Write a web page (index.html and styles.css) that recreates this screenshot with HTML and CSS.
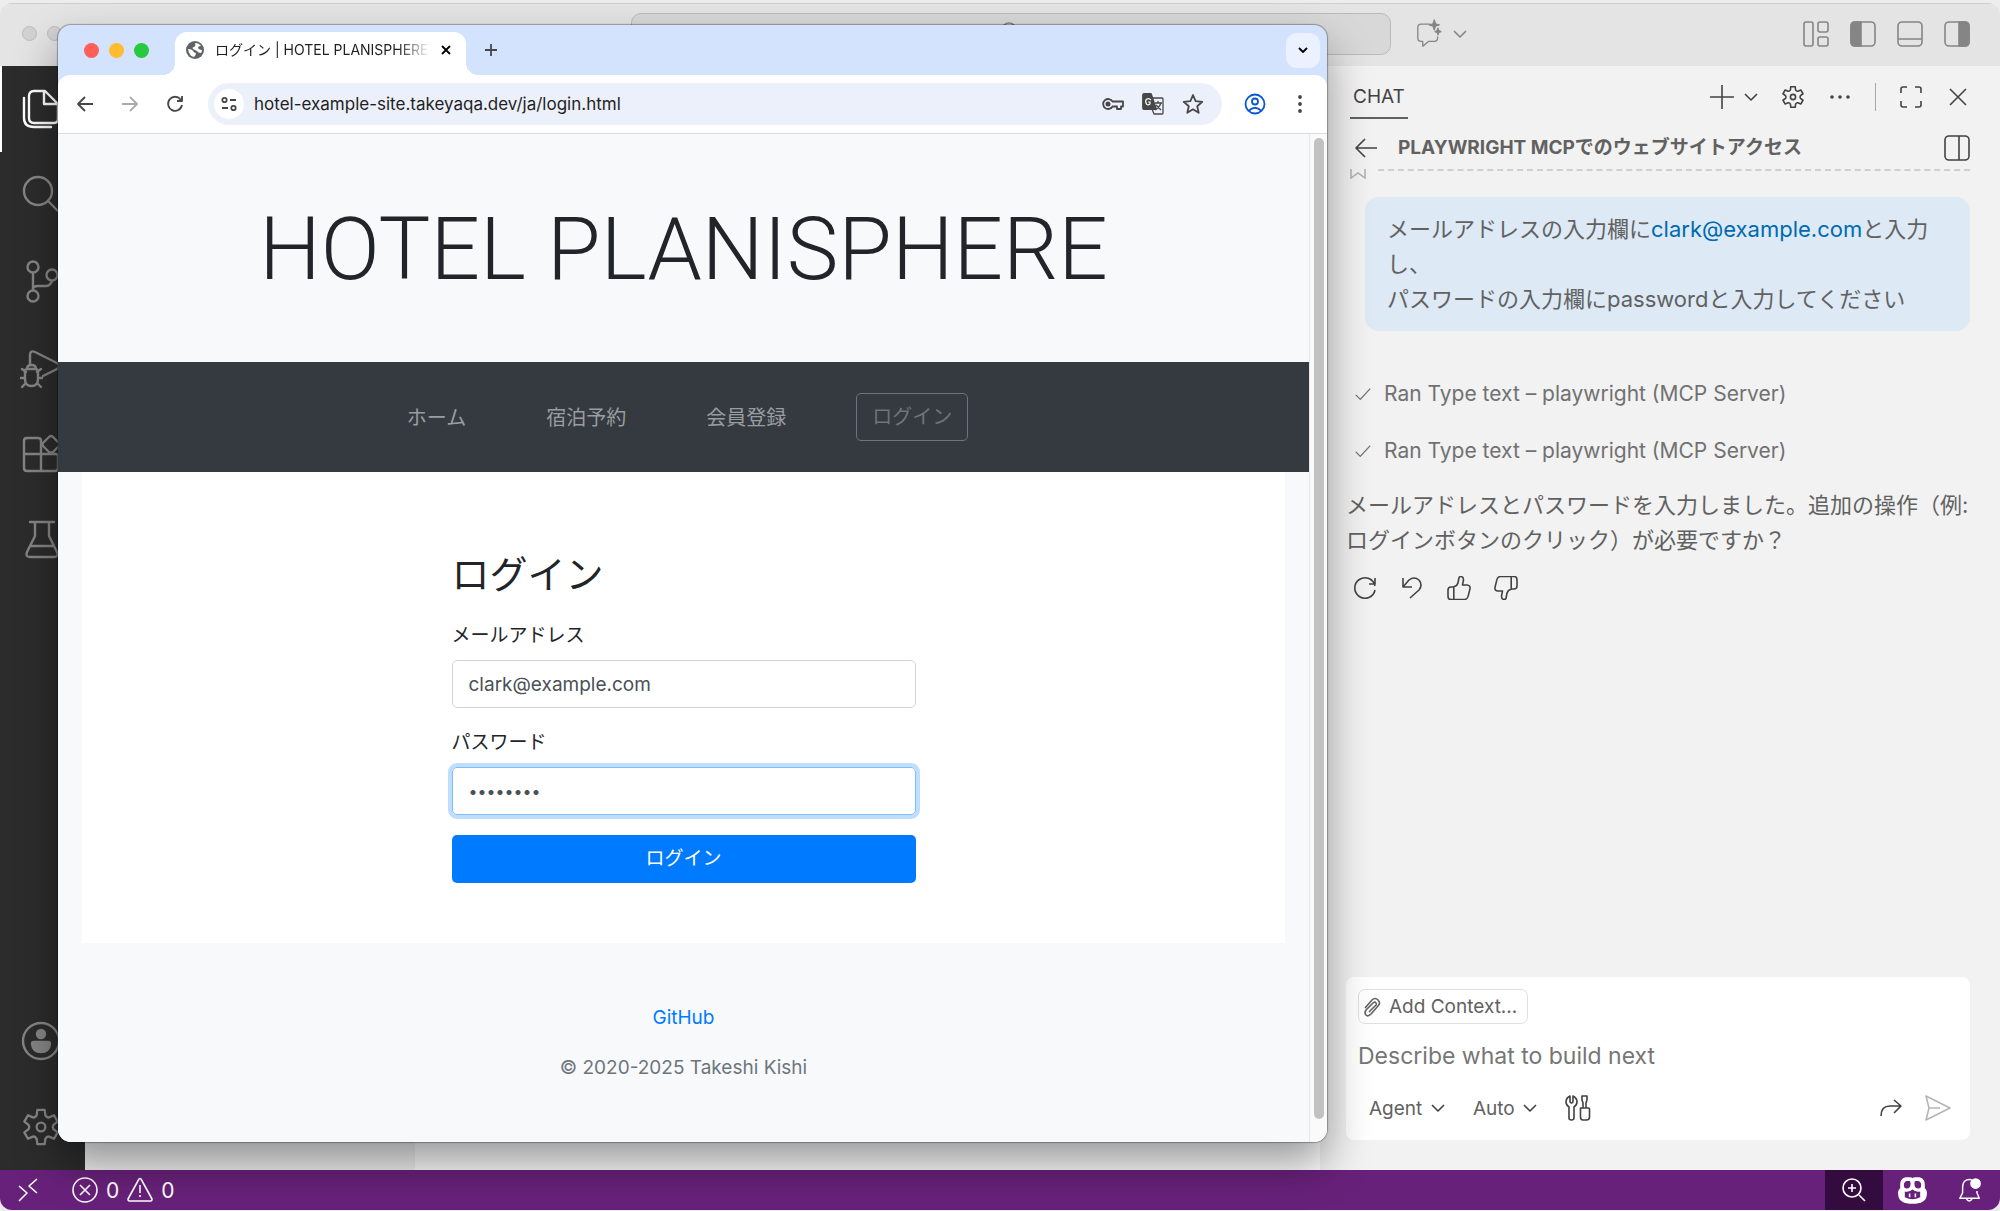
FILE: index.html
```html
<!DOCTYPE html>
<html lang="ja">
<head>
    <meta charset="UTF-8">
    <meta name="viewport" content="width=device-width, initial-scale=1.0">
    <title>ログイン | HOTEL PLANISPHERE</title>
    <link rel="stylesheet" href="styles.css">
</head>
<body>
    <svg class="symbols" aria-hidden="true">
        <symbol id="gear" viewBox="0 0 24 24"><path d="M9.4 4.9L9.8 1.7H14.2L14.6 4.9Q15.5 6.6 16.85 6.2L19.8 4.95L22 8.75L19.45 10.7Q18.6 12 19.45 13.3L22 15.25L19.8 19.05L16.85 17.8Q15.5 17.4 14.6 19.1L14.2 22.3H9.8L9.4 19.1Q8.5 17.4 7.15 17.8L4.2 19.05L2 15.25L4.55 13.3Q5.4 12 4.55 10.7L2 8.75L4.2 4.95L7.15 6.2Q8.5 6.6 9.4 4.9Z"/><circle cx="12" cy="12" r="2.6"/></symbol>
        <symbol id="chevron" viewBox="0 0 14 14"><path d="M1 4l6 6 6-6"/></symbol>
        <symbol id="check" viewBox="0 0 20 20"><path d="M2 11l5 5L18 4"/></symbol>
        <symbol id="thumb" viewBox="0 0 24 24"><path d="M6.500 11L9.500 9.500 11 7 11.800 2.500Q12.400 0 14.500 .5Q17 1.500 16.300 4.800L15.500 9H20Q23.500 9.200 23 12.600L21.300 19.600Q20.500 23.500 17.500 23.500H4Q1 23.500 1 20.500V14Q1 11 4 11ZM6.800 11V23.500"/></symbol>
    </svg>

    <div class="editor">
        <header class="titlebar">
            <div class="lights dim"><span></span><span></span><span></span></div>
            <button class="command-center" aria-label="Search">
                <svg class="icon" viewBox="0 0 24 24"><circle cx="10" cy="8" r="7"/><path d="M15 13l7 7"/></svg>
            </button>
            <button class="icon-group" aria-label="Toggle Chat">
                <svg class="icon chat-icon" viewBox="0 0 30 34"><path d="M17 5H6Q2 5 2 9V22Q2 26 6 26H8V32L15 26H22Q26 26 26 22V20"/><path class="solid" d="M22 0L23.4 4.600L28 6L23.400 7.400L22 12L20.600 7.400L16 6L20.600 4.600ZM26.500 10L27.500 13L30 14L27.500 15L26.500 18L25.500 15L23 14L25.500 13Z"/></svg>
                <svg class="icon small"><use href="#chevron"/></svg>
            </button>
            <div class="layout-buttons">
                <button aria-label="Customize Layout"><svg class="icon large" viewBox="0 0 26 26"><rect x="1" y="1" width="9" height="24" rx="2"/><rect x="15" y="1" width="10" height="10" rx="2"/><rect x="15" y="16" width="10" height="9" rx="2"/></svg></button>
                <button aria-label="Toggle Side Bar"><svg class="icon large" viewBox="0 0 26 26"><rect x="1" y="1" width="24" height="24" rx="4"/><path class="solid" d="M5 1H11V25H5Q1 25 1 21V5Q1 1 5 1Z"/></svg></button>
                <button aria-label="Toggle Panel"><svg class="icon large" viewBox="0 0 26 26"><rect x="1" y="1" width="24" height="24" rx="4"/><path d="M1 18H25"/></svg></button>
                <button aria-label="Toggle Secondary Side Bar"><svg class="icon large" viewBox="0 0 26 26"><rect x="1" y="1" width="24" height="24" rx="4"/><path class="solid" d="M15 1H21Q25 1 25 5V21Q25 25 21 25H15Z"/></svg></button>
            </div>
        </header>

        <div class="workbench">
            <nav class="activity-bar">
                <button class="active" aria-label="Explorer"><svg class="icon huge" viewBox="0 0 40 40"><path d="M13 2H24L37 15V30Q37 34 33 34H13Q8 34 8 29V7Q8 2 13 2ZM23 2V15H37M3 9V29Q3 38 13 38H30"/></svg></button>
                <button aria-label="Search"><svg class="icon huge" viewBox="0 0 40 40"><circle cx="17" cy="16" r="14"/><path d="M27 26L38 37"/></svg></button>
                <button aria-label="Source Control"><svg class="icon huge" viewBox="0 0 40 40"><circle cx="12" cy="6" r="5.500"/><circle cx="12" cy="35" r="5.500"/><circle cx="31" cy="14" r="5.500"/><path d="M12 12V29M12 28Q12 25 17 25H25Q29 25 31 20"/></svg></button>
                <button aria-label="Run and Debug"><svg class="icon huge" viewBox="0 0 40 40"><path d="M9 17V8Q9 3 14 5L36 16Q40 19 36 22L22 29"/><path d="M4 24Q4 22 7 22H14Q17 22 17 25V32Q17 39 10.500 39T4 32ZM6 22Q6 18 10.500 18T15 22M0 31H4M17 31H21M1 22L5 25M20 22L16 25M1 40L5 36M20 40L16 36"/></svg></button>
                <button aria-label="Extensions"><svg class="icon huge" viewBox="0 0 40 40"><path d="M6 5H17Q20 5 20 8V38H6Q3 38 3 35V8Q3 5 6 5ZM3 21H35Q37 21 37 24V35Q37 38 34 38H20M28 4Q30 2 32 4L38 10Q39 12 38 13L32 19Q30 20 28 19L22 13Q21 11 22 10Z"/></svg></button>
                <button aria-label="Testing"><svg class="icon huge" viewBox="0 0 40 40"><path d="M9 3H33M14 3V17L6 33Q4 38 9 38H33Q38 38 36 33L28 17V3M10 27H32"/></svg></button>
                <button class="bottom" aria-label="Accounts"><svg class="icon huge" viewBox="0 0 40 40"><circle cx="20" cy="20" r="18"/><circle class="solid" cx="20" cy="13" r="4"/><path class="solid" d="M13 21H27Q29 21 29 23Q28 31 20 31T11 23Q11 21 13 21Z"/></svg></button>
                <button aria-label="Manage"><svg class="icon huge thin"><use href="#gear"/></svg></button>
            </nav>
            <div class="side-bar"></div>
            <div class="editor-area"></div>

            <aside class="chat">
                <div class="chat-header">
                    <h2>CHAT</h2>
                    <div class="chat-actions">
                        <button class="icon-group plus" aria-label="New Chat"><svg class="icon" viewBox="0 0 24 24"><path d="M12 0V24M0 12H24"/></svg><svg class="icon small"><use href="#chevron"/></svg></button>
                        <button aria-label="Configure Chat"><svg class="icon"><use href="#gear"/></svg></button>
                        <button aria-label="More"><svg class="icon" viewBox="0 0 24 24"><circle class="solid" cx="4" cy="12" r="1"/><circle class="solid" cx="12" cy="12" r="1"/><circle class="solid" cx="20" cy="12" r="1"/></svg></button>
                        <span class="separator"></span>
                        <button aria-label="Maximize"><svg class="icon" viewBox="0 0 24 24"><path d="M2 8V4Q2 2 4 2H8M16 2H20Q22 2 22 4V8M22 16V20Q22 22 20 22H16M8 22H4Q2 22 2 20V16"/></svg></button>
                        <button aria-label="Close"><svg class="icon" viewBox="0 0 24 24"><path d="M4 4L20 20M20 4L4 20"/></svg></button>
                    </div>
                </div>
                <div class="chat-title">
                    <button aria-label="Back"><svg class="icon" viewBox="0 0 24 24"><path d="M23 12H3M11 3L2 12L11 21"/></svg></button>
                    <h3>PLAYWRIGHT MCPでのウェブサイトアクセス</h3>
                    <button aria-label="Show Sessions"><svg class="icon large" viewBox="0 0 26 26"><rect x="1" y="1" width="24" height="24" rx="4"/><path d="M15 1V25"/></svg></button>
                </div>
                <div class="checkpoint">
                    <svg viewBox="0 0 16 10"><path d="M1 0V9L8 4L15 9V0"/></svg>
                    <span></span>
                </div>

                <div class="messages">
                    <div class="bubble">メールアドレスの入力欄に<a href="mailto:clark@example.com">clark@example.com</a>と入力し、<br>パスワードの入力欄にpasswordと入力してください</div>
                    <p class="tool-run"><svg class="icon check"><use href="#check"/></svg>Ran Type text – playwright (MCP Server)</p>
                    <p class="tool-run"><svg class="icon check"><use href="#check"/></svg>Ran Type text – playwright (MCP Server)</p>
                    <p class="reply">メールアドレスとパスワードを入力しました。追加の操作（例: ログインボタンのクリック）が必要ですか？</p>
                    <div class="reply-actions">
                        <button aria-label="Retry"><svg class="icon" viewBox="0 0 24 24"><path d="M22 10A10.200 10.200 0 1 0 22 14M22 2V8H16"/></svg></button>
                        <button aria-label="Undo"><svg class="icon" viewBox="0 0 24 24"><path d="M3 2V11H12M3 11L9 4Q14 0 19 4Q23 9 19 14L10 22"/></svg></button>
                        <button aria-label="Helpful"><svg class="icon"><use href="#thumb"/></svg></button>
                        <button aria-label="Unhelpful"><svg class="icon flipped"><use href="#thumb"/></svg></button>
                    </div>
                </div>

                <form class="prompt">
                    <button type="button" class="add-context"><svg class="icon clip" viewBox="0 0 18 20"><path d="M2 11L9 3Q12 0 15 3T15 9L8 17Q5 20 3 18T3 13L10 6Q12 4 13 6T12 9L6 15"/></svg>Add Context...</button>
                    <input type="text" class="prompt-text" aria-label="Chat input" placeholder="Describe what to build next">
                    <div class="prompt-bar">
                        <label class="picker"><select aria-label="Mode"><option>Agent</option></select><svg class="icon small"><use href="#chevron"/></svg></label>
                        <label class="picker"><select aria-label="Model"><option>Auto</option></select><svg class="icon small"><use href="#chevron"/></svg></label>
                        <button type="button" aria-label="Configure Tools"><svg class="icon large" viewBox="0 0 26 26"><path d="M5 1Q1 3 1 7Q1 10 4 12V23Q4 25 6.500 25T9 23V12Q12 10 12 7Q12 3 8 1V6Q8 8 6.500 8T5 6ZM17 1H22V5L21 8V13H18V8L17 5ZM15.500 13H23.500Q24.500 13 24.500 14V22Q24.500 25 21.500 25H18Q15.500 25 15.500 22Z"/></svg></button>
                        <div class="prompt-submit">
                            <button type="button" aria-label="Continue"><svg class="icon" viewBox="0 0 24 24"><path d="M2 20Q2 10 11 10H22M15 4L22 10L15 17"/></svg></button>
                            <button class="send" aria-label="Send"><svg class="icon large" viewBox="0 0 26 26"><path d="M1 1L25 13L1 25L4 13ZM4 13H15"/></svg></button>
                        </div>
                    </div>
                </form>
            </aside>
        </div>

        <footer class="status-bar">
            <button class="remote" aria-label="Remote"><svg class="icon" viewBox="0 0 24 24"><path d="M3 8L11 15L3 23M21 1L13 8L21 15"/></svg></button>
            <button class="problems">
                <svg class="icon large" viewBox="0 0 26 26"><circle cx="13" cy="13" r="12"/><path d="M8 8L18 18M18 8L8 18"/></svg>0
                <svg class="icon large" viewBox="0 0 26 26"><path d="M12 2Q13 1 14 2L25 22Q25 24 24 24H2Q1 24 1 22ZM13 8V16M13 18V20"/></svg>0
            </button>
            <div class="status-right">
                <button class="zoom" aria-label="Zoom"><svg class="icon" viewBox="0 0 24 24"><circle cx="10" cy="10" r="9"/><path d="M17 17L23 23M10 6V14M6 10H14"/></svg></button>
                <button aria-label="Copilot"><svg class="icon copilot" viewBox="0 0 30 26"><path class="solid" d="M8 0H12Q14 0 15 1Q16 0 18 0H22Q28 1 27 11Q30 13 29 18Q28 26 15 26T1 18Q0 13 3 11Q2 1 8 0Z"/><path class="hole" d="M9 3H12Q13 3 13 6Q13 11 9 11Q6 11 6 7Q6 4 9 3ZM18 3H21Q24 4 24 7Q24 11 21 11Q17 11 17 6Q17 3 18 3ZM7 14Q12 15 15 12Q18 15 23 14V20Q15 24 7 20Z"/><path d="M12 16V20M18 16V20"/></svg></button>
                <button aria-label="Notifications"><svg class="icon bell" viewBox="0 0 24 26"><path d="M14 2Q4 0 4 11V16L1 22H22L19.500 16V14M8 22Q11 28 14.500 22"/><circle class="solid" cx="18" cy="6" r="5"/></svg></button>
            </div>
        </footer>
    </div>

    <div class="browser">
        <div class="tab-strip">
            <div class="lights"><span></span><span></span><span></span></div>
            <div class="tab">
                <svg class="globe" viewBox="0 0 18 18"><circle class="disc" cx="9" cy="9" r="9"/><path class="land" d="M2 8Q6 8 7 10Q8 12 10 12Q10 14 8 16Q3 15 2 8ZM9 2Q13 2 15 5Q12 5 12 7Q13 9 16 9Q16 11 15 12Q12 12 11 10Q9 9 7 8Q6 6 8 6Q10 5 9 2Z"/></svg>
                <span class="tab-title">ログイン | HOTEL PLANISPHERE</span>
                <button aria-label="Close tab"><svg class="icon tiny" viewBox="0 0 10 10"><path d="M1 1L9 9M9 1L1 9"/></svg></button>
            </div>
            <button class="new-tab" aria-label="New tab"><svg class="icon small" viewBox="0 0 14 14"><path d="M7 1V13M1 7H13"/></svg></button>
            <button class="tab-search" aria-label="Search tabs"><svg class="icon tiny" viewBox="0 0 10 10"><path d="M1 3L5 7L9 3"/></svg></button>
        </div>

        <div class="toolbar">
            <button aria-label="Back"><svg class="icon nav-icon" viewBox="0 0 18 18"><path d="M17 9H2M9 2L2 9L9 16"/></svg></button>
            <button class="disabled" aria-label="Forward"><svg class="icon nav-icon" viewBox="0 0 18 18"><path d="M1 9H16M9 2L16 9L9 16"/></svg></button>
            <button aria-label="Reload"><svg class="icon nav-icon" viewBox="0 0 18 18"><path d="M15 5A7 7 0 1 0 16 10M16 1V6H11"/></svg></button>
            <div class="omnibox">
                <button class="site-info" aria-label="Site information"><svg class="icon nav-icon" viewBox="0 0 18 18"><circle cx="4.500" cy="5" r="2.200"/><path d="M10 5H16M2 13H8"/><circle cx="13.500" cy="13" r="2.200"/></svg></button>
                <input type="text" class="url" aria-label="Address" value="hotel-example-site.takeyaqa.dev/ja/login.html">
                <button aria-label="Passwords"><svg class="icon page-icon" viewBox="0 0 24 24"><path d="M11.500 9.500A5 5 0 1 0 11.500 14.500H16V17H20V14.500H22V9.500Z"/><circle class="solid" cx="7" cy="12" r="1.600"/></svg></button>
                <button aria-label="Translate"><svg class="icon page-icon" viewBox="0 0 24 24"><path class="solid" d="M3 2H10L15 17H3Q2 17 2 16V3Q2 2 3 2Z"/><path class="thin-line" d="M12 6H21Q22 6 22 7V21Q22 22 21 22H13L11 17M14 11H21M17 9V11M20 11Q18 16 14 18M15 13L20 18"/><path class="light" d="M10 8Q8 6 6 7T5 11T9 12V10H7"/></svg></button>
                <button aria-label="Bookmark"><svg class="icon page-icon" viewBox="0 0 24 24"><path d="M12 3L14.600 9.200L21.300 9.800L16.200 14.200L17.700 20.800L12 17.300L6.300 20.800L7.800 14.200L2.700 9.800L9.400 9.200Z"/></svg></button>
            </div>
            <button class="profile" aria-label="Profile"><svg class="icon page-icon" viewBox="0 0 24 24"><circle cx="12" cy="12" r="9.500"/><circle cx="12" cy="9.500" r="3"/><path d="M5.500 19Q12 12.500 18.500 19"/></svg></button>
            <button class="more" aria-label="Menu"><svg class="icon page-icon" viewBox="0 0 24 24"><circle class="solid" cx="12" cy="5" r="1"/><circle class="solid" cx="12" cy="12" r="1"/><circle class="solid" cx="12" cy="19" r="1"/></svg></button>
        </div>

        <div class="viewport">
            <div class="page">
                <header class="hero"><h1>HOTEL PLANISPHERE</h1></header>
                <nav class="site-nav">
                    <a href="#">ホーム</a>
                    <a href="#">宿泊予約</a>
                    <a href="#">会員登録</a>
                    <button disabled>ログイン</button>
                </nav>
                <main class="content">
                    <form class="login-form">
                        <h2>ログイン</h2>
                        <label for="email">メールアドレス</label>
                        <input type="email" id="email" value="clark@example.com">
                        <label for="password">パスワード</label>
                        <input type="password" id="password" class="focused" value="password">
                        <button>ログイン</button>
                    </form>
                </main>
                <footer class="site-footer">
                    <a href="#">GitHub</a>
                    <p>© 2020-2025 Takeshi Kishi</p>
                </footer>
            </div>
            <div class="scrollbar"><span></span></div>
        </div>
    </div>
</body>
</html>
```
FILE: styles.css
```css
* {
    box-sizing: border-box;
}
body {
    margin: 0;
    height: 100vh;
    padding: 3px 0 1px;
    background-color: #ededed;
    font-family: Inter, "Noto Sans CJK JP", sans-serif;
    overflow: hidden;
    position: relative;
}
h1, h2, h3, p {
    margin: 0;
    font-weight: 400;
}
a {
    text-decoration: none;
}
button, input, select {
    font: inherit;
    color: inherit;
    border: none;
    background: none;
    padding: 0;
    margin: 0;
}
button {
    display: flex;
    align-items: center;
    justify-content: center;
    flex-shrink: 0;
}
input {
    outline: none;
    min-width: 0;
}

/* icons */
.symbols {
    position: absolute;
    width: 0;
    height: 0;
}
.icon {
    width: 24px;
    height: 24px;
    flex-shrink: 0;
    fill: none;
    stroke: currentColor;
    stroke-width: 1.6;
    stroke-linejoin: round;
    overflow: visible;
}
.icon .solid {
    fill: currentColor;
}
.icon.tiny {
    width: 10px;
    height: 10px;
}
.icon.small {
    width: 14px;
    height: 14px;
}
.icon.large {
    width: 26px;
    height: 26px;
}
.icon.huge {
    width: 40px;
    height: 40px;
    stroke-width: 2.4;
    stroke-linecap: round;
}
.icon.thin {
    stroke-width: 1.4;
}
.icon-group {
    gap: 10px;
}

/* editor window */
.editor {
    height: 100%;
    display: flex;
    flex-direction: column;
    border-radius: 12px;
    overflow: hidden;
    background-color: #f2f2f2;
}
.titlebar {
    height: 63px;
    flex-shrink: 0;
    display: flex;
    align-items: center;
    padding: 0 30px 3px 22px;
    background-color: #e4e4e4;
    border-top: 1px solid #cfcfcf;
    color: #858585;
}
.lights {
    display: flex;
    gap: 10px;
}
.lights span {
    width: 15px;
    height: 15px;
    border-radius: 50%;
    background-color: #ff5f57;
}
.lights span:nth-child(2) {
    background-color: #febc2e;
}
.lights span:nth-child(3) {
    background-color: #28c840;
}
.lights.dim span {
    background-color: #d2d2d2;
    border: 1px solid #bdbdbd;
}
.command-center {
    width: 39%;
    height: 42px;
    margin-left: auto;
    border: 1px solid #bababa;
    border-radius: 10px;
    background-color: #d8d8d8;
}
.titlebar .icon-group {
    margin-left: 23px;
}
.chat-icon {
    width: 29px;
    height: 28px;
}
.layout-buttons {
    display: flex;
    gap: 21px;
    margin-left: 336px;
}
.workbench {
    flex: 1;
    display: flex;
    min-height: 0;
}
.activity-bar {
    width: 85px;
    display: flex;
    flex-direction: column;
    background-color: #2c2c2c;
    color: #858585;
}
.activity-bar button {
    height: 86px;
    padding-right: 3px;
}
.activity-bar .active {
    color: #fff;
    box-shadow: inset 2px 0 #fff;
}
.activity-bar .bottom {
    margin-top: auto;
}
.side-bar {
    width: 330px;
    background-color: #f3f3f3;
}
.editor-area {
    flex: 1;
    background-color: #fff;
}

/* chat panel */
.chat {
    width: 34%;
    padding: 0 30px;
    display: flex;
    flex-direction: column;
    background-color: #f2f2f2;
    color: #616161;
}
.chat-header {
    height: 61px;
    display: flex;
    align-items: center;
    justify-content: space-between;
    color: #424242;
}
.chat-header h2 {
    padding: 11px 3px 8px;
    border-bottom: 2px solid #616161;
    font-size: 19px;
    line-height: 24px;
}
.chat-actions {
    display: flex;
    align-items: center;
    gap: 23px;
}
.separator {
    width: 1px;
    height: 28px;
    background-color: #a8a8a8;
}
.chat-title {
    height: 42px;
    display: flex;
    align-items: center;
    gap: 20px;
    padding-left: 4px;
    color: #424242;
}
.chat-title h3 {
    flex: 1;
    font-size: 19px;
    font-weight: 700;
    line-height: 24px;
    color: #616161;
}
.checkpoint {
    display: flex;
    gap: 12px;
}
.checkpoint svg {
    width: 16px;
    height: 10px;
    fill: none;
    stroke: #b0b0b0;
    stroke-width: 1.5;
}
.checkpoint span {
    flex: 1;
    height: 0;
    border-top: 2px dashed #cfcfcf;
}
.messages {
    flex: 1;
    padding-top: 18px;
    font-size: 22px;
    line-height: 35px;
}
.bubble {
    margin-left: 15px;
    padding: 15px 22px 14px;
    border-radius: 14px;
    background-color: #dde9f5;
    margin-bottom: 34px;
}
.bubble a {
    color: #006ab1;
}
.tool-run {
    display: flex;
    align-items: center;
    gap: 12px;
    padding: 11px 0 11px 4px;
    font-size: 21px;
    color: #717171;
}
.icon.check {
    width: 18px;
    height: 18px;
    stroke-width: 1.4;
}
.reply {
    margin-top: 9px;
    margin-left: -4px;
    margin-right: -4px;
}
.reply-actions {
    display: flex;
    gap: 23px;
    padding: 18px 3px;
    color: #424242;
}
.flipped {
    transform: rotate(180deg);
}
.prompt {
    margin: 0 0 30px -4px;
    padding: 12px;
    border-radius: 8px;
    background-color: #fff;
}
.add-context {
    height: 35px;
    padding: 0 10px 0 4px;
    gap: 8px;
    border: 1px solid #e0e0e0;
    border-radius: 7px;
    font-size: 19px;
}
.icon.clip {
    width: 18px;
    height: 20px;
}
.prompt-text {
    width: 100%;
    margin: 16px 0;
    font-size: 23px;
    line-height: 32px;
    height: 32px;
}
.prompt-text::placeholder {
    color: #767676;
}
.prompt-bar {
    display: flex;
    align-items: center;
    height: 40px;
    gap: 28px;
    padding: 0 7px 0 11px;
    font-size: 19px;
    color: #424242;
}
.picker {
    display: flex;
    align-items: center;
    gap: 8px;
}
.picker select {
    appearance: none;
    color: #616161;
}
.prompt-submit {
    display: flex;
    gap: 22px;
    margin-left: auto;
}
.send {
    color: #b5b5b5;
}

/* status bar */
.status-bar {
    height: 40px;
    flex-shrink: 0;
    display: flex;
    background-color: #68217a;
    color: #fff;
}
.remote {
    width: 56px;
}
.problems {
    gap: 8px;
    padding-left: 16px;
    font-size: 21px;
}
.status-right {
    display: flex;
    margin-left: auto;
    padding-right: 1px;
}
.status-right button {
    width: 58px;
}
.status-right .zoom {
    background-color: #340b3f;
}
.icon.copilot {
    width: 29px;
    height: 25px;
}
.copilot .hole {
    fill: #68217a;
    stroke: none;
}

/* browser window */
.browser {
    position: absolute;
    top: 25px;
    left: 58px;
    width: 63.45%;
    bottom: 69px;
    display: flex;
    flex-direction: column;
    border-radius: 13px;
    overflow: hidden;
    background-color: #d3e2fd;
    box-shadow: 0 0 1px 1px rgba(0, 0, 0, 0.3), 0 22px 44px rgba(0, 0, 0, 0.4);
}
.tab-strip {
    height: 50px;
    display: flex;
    align-items: center;
    padding: 0 7px 0 26px;
}
.tab {
    align-self: flex-end;
    width: 291px;
    height: 43px;
    margin-left: 26px;
    padding: 0 15px 7px 11px;
    display: flex;
    align-items: center;
    gap: 11px;
    border-radius: 12px 12px 0 0;
    background-color: #fff;
    position: relative;
}
.tab::before, .tab::after {
    content: "";
    position: absolute;
    bottom: 0;
    width: 12px;
    height: 12px;
}
.tab::before {
    right: 100%;
    background: radial-gradient(circle at 0 0, transparent 12px, #fff 12px);
}
.tab::after {
    left: 100%;
    background: radial-gradient(circle at 100% 0, transparent 12px, #fff 12px);
}
.globe {
    width: 18px;
    height: 18px;
    flex-shrink: 0;
}
.globe .disc {
    fill: #5f6368;
}
.globe .land {
    fill: #fff;
}
.tab-title {
    flex: 1;
    overflow: hidden;
    white-space: nowrap;
    font-size: 14px;
    line-height: 20px;
    color: #1f1f1f;
    mask-image: linear-gradient(to right, #000 85%, transparent);
}
.new-tab {
    margin-left: 18px;
    color: #474747;
}
.tab-search {
    width: 34px;
    height: 35px;
    margin-left: auto;
    border-radius: 11px;
    background-color: #ebf1fe;
}
.toolbar {
    height: 59px;
    display: flex;
    align-items: center;
    gap: 27px;
    padding: 0 15px 0 18px;
    border-radius: 12px 12px 0 0;
    border-bottom: 1px solid #dcdcdc;
    background-color: #fff;
    color: #474747;
}
.toolbar .icon, .tab-strip .icon {
    stroke-width: 1.8;
}
.icon.nav-icon {
    width: 18px;
    height: 18px;
}
.disabled {
    color: #ababab;
}
.omnibox {
    flex: 1;
    height: 42px;
    display: flex;
    align-items: center;
    gap: 16px;
    padding: 0 17px 0 6px;
    margin: 0 -6px 0 -3px;
    border-radius: 21px;
    background-color: #ecf0fa;
}
.site-info {
    width: 30px;
    height: 30px;
    border-radius: 50%;
    background-color: #fff;
}
.url {
    flex: 1;
    margin-left: -6px;
    font-size: 17px;
    color: #1f1f1f;
}
.toolbar .thin-line {
    stroke-width: 1.3;
}
.toolbar .light {
    stroke: #fff;
    stroke-width: 1.2;
}
.profile {
    color: #0b57d0;
}
.more {
    margin-left: -6px;
}
.viewport {
    flex: 1;
    display: flex;
    min-height: 0;
    background-color: #f8f9fb;
}
.page {
    flex: 1;
    overflow: hidden;
    font-size: 19px;
    line-height: 30px;
    color: #212529;
}
.scrollbar {
    width: 18px;
    padding: 4px 3px 23px 4px;
    border-left: 1px solid #e8e8e8;
    background-color: #fafafa;
}
.scrollbar span {
    display: block;
    height: 100%;
    border-radius: 5px;
    background-color: #c1c1c1;
}

/* hotel page */
.hero {
    padding: 62px 24px 60px;
    text-align: center;
}
.hero h1 {
    font-family: Roboto, Inter, sans-serif;
    font-size: 87px;
    font-weight: 300;
    line-height: 106px;
}
.site-nav {
    height: 110px;
    display: flex;
    align-items: center;
    justify-content: center;
    gap: 80px;
    padding-left: 8px;
    background-color: #343a40;
    font-size: 20px;
}
.site-nav a {
    padding-top: 2px;
    color: #9a9da0;
}
.site-nav button {
    height: 48px;
    margin-left: -10px;
    padding: 0 15px;
    border: 1px solid #6c757d;
    border-radius: 5px;
    color: #6c757d;
}
.content {
    margin: 0 24px;
    padding: 79px 0 60px;
    background-color: #fff;
}
.login-form {
    width: 464px;
    margin: 0 auto;
    display: flex;
    flex-direction: column;
}
.login-form h2 {
    font-size: 38px;
    line-height: 46px;
    margin-bottom: 4px;
}
.login-form label {
    margin: 20px 0 9px;
}
.login-form input {
    height: 48px;
    padding: 0 16px;
    border: 1px solid #ced4da;
    border-radius: 5px;
    color: #495057;
}
.login-form .focused {
    border-color: #80bdff;
    box-shadow: 0 0 0 4px #bfdeff;
    font-size: 16px;
}
.login-form button {
    height: 48px;
    margin-top: 20px;
    border-radius: 5px;
    background-color: #007bff;
    color: #fff;
}
.site-footer {
    padding: 60px 24px;
    text-align: center;
    color: #6c757d;
}
.site-footer a {
    color: #007bff;
}
.site-footer p {
    margin-top: 20px;
}
```
